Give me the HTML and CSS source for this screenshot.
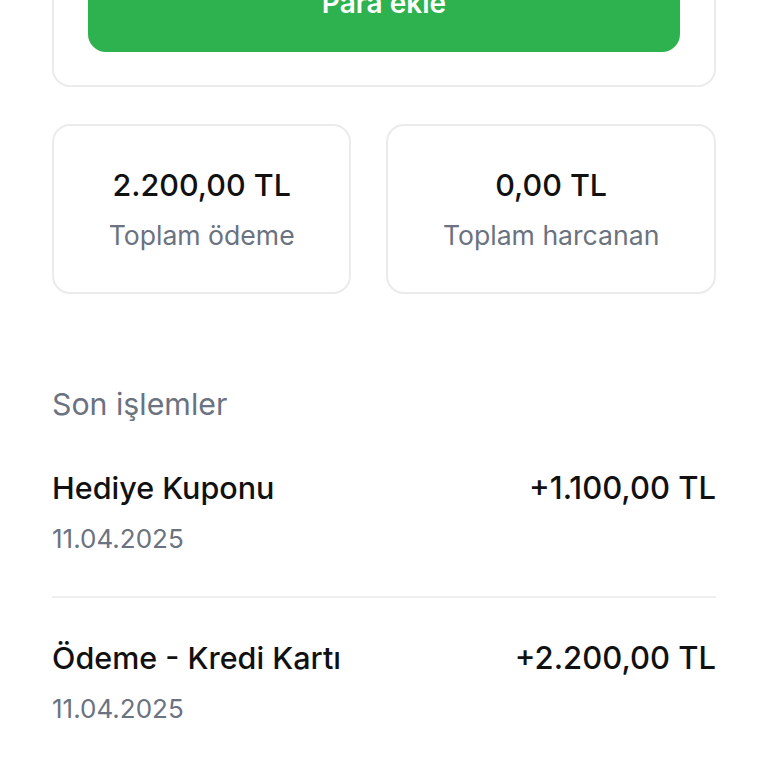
FILE: index.html
```html
<!DOCTYPE html>
<html lang="tr">
<head>
<meta charset="utf-8">
<link rel="stylesheet" href="styles.css">
</head>
<body>
<main class="page">
  <section class="topcard">
    <button class="add-btn">Para ekle</button>
  </section>
  <section class="stats">
    <div class="stat">
      <div class="stat-value">2.200,00 TL</div>
      <div class="stat-label">Toplam ödeme</div>
    </div>
    <div class="stat">
      <div class="stat-value">0,00 TL</div>
      <div class="stat-label">Toplam harcanan</div>
    </div>
  </section>
  <h2 class="section-title">Son işlemler</h2>
  <ul class="tx-list">
    <li class="tx">
      <div class="tx-main">
        <div class="tx-title">Hediye Kuponu</div>
        <div class="tx-date">11.04.2025</div>
      </div>
      <div class="tx-amount">+1.100,00 TL</div>
    </li>
    <li class="tx">
      <div class="tx-main">
        <div class="tx-title">Ödeme - Kredi Kartı</div>
        <div class="tx-date">11.04.2025</div>
      </div>
      <div class="tx-amount">+2.200,00 TL</div>
    </li>
  </ul>
</main>
</body>
</html>
```

FILE: styles.css
```css
html, body {
  margin: 0;
  padding: 0;
  background: #ffffff;
}
body {
  font-family: "Inter", "Noto Sans", sans-serif;
  color: #111111;
  overflow: hidden;
}
.page {
  padding: 0 52px;
}
.topcard {
  margin-top: -82px;
  border: 2px solid #ebebeb;
  border-radius: 18px;
  padding: 34px 34px 33px;
}
.add-btn {
  display: block;
  width: 100%;
  height: 98px;
  border: none;
  border-radius: 18px;
  background: #2eb24f;
  color: #ffffff;
  font-family: "Inter", sans-serif;
  font-weight: 600;
  font-size: 28px;
  padding: 0;
}
.stats {
  display: flex;
  gap: 35px;
  margin-top: 37px;
}
.stat {
  flex: 1 1 auto;
  height: 166px;
  border: 2px solid #ebebeb;
  border-radius: 18px;
  display: flex;
  flex-direction: column;
  align-items: center;
  justify-content: center;
}
.stat-value {
  font-size: 30.5px;
  line-height: 40px;
  font-weight: 500;
}
.stat-label {
  margin-top: 12px;
  font-size: 26.6px;
  line-height: 36px;
  color: #6b7280;
}
.section-title {
  margin: 90px 0 0;
  font-size: 30.3px;
  line-height: 40px;
  font-weight: 400;
  color: #6b7280;
}
.tx-list {
  list-style: none;
  margin: 0;
  padding: 0;
}
.tx {
  display: flex;
  justify-content: space-between;
  align-items: flex-start;
  padding: 42px 0 41px;
}
.tx:first-child {
  padding-top: 46px;
}
.tx + .tx {
  border-top: 2px solid #efefef;
}
.tx-title, .tx-amount {
  font-size: 30.5px;
  line-height: 36px;
  font-weight: 500;
}
.tx-amount {
  font-size: 31px;
}
.tx-date {
  margin-top: 17px;
  font-size: 26px;
  line-height: 32px;
  color: #6b7280;
}
```
